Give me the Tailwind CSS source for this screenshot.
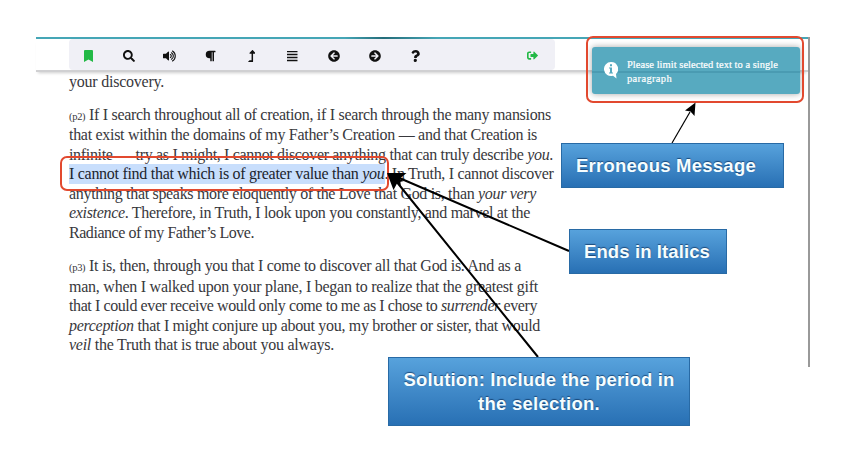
<!DOCTYPE html>
<html lang="en">
<head>
<meta charset="utf-8">
<title>Selection message annotations</title>
<script src="https://cdn.jsdelivr.net/npm/@tailwindcss/browser@4"></script>
</head>
<body class="bg-white">
<div class="relative w-[846px] h-[462px] overflow-hidden pl-9 pt-[37px]">
  <!-- Reader window -->
  <main class="w-[774px] h-[330px] border-r-2 border-[#999]">
    <div class="h-[2px] bg-linear-to-r from-[#45a6b6] from-40% via-[#246d7a] via-45% to-[#45a6b6] to-52%"></div>
    <header class="h-[33px] pl-[33px] border-b-2 border-[#d0d0d2] shadow-[0_3px_3px_-2px_rgba(0,0,0,0.2)]">
      <nav class="w-[486px] h-[31px] bg-[#f0f0f6] rounded-sm flex items-center text-[#111] pt-[2px]">
        <span class="w-[39px] flex justify-center"><svg class="h-[12px]" viewBox="0 0 384 512" fill="#23b946"><path d="M0 512V48C0 21.500 21.500 0 48 0h288c26.500 0 48 21.500 48 48v464L192 400z"/></svg></span>
        <span class="w-[41px] flex justify-center"><svg class="h-[12px]" viewBox="0 0 512 512" fill="currentColor"><path d="M505 442.700L405.300 343c-4.500-4.500-10.600-7-17-7H372c27.600-35.300 44-79.700 44-128C416 93.100 322.900 0 208 0S0 93.100 0 208s93.100 208 208 208c48.300 0 92.700-16.400 128-44v16.300c0 6.400 2.500 12.500 7 17l99.700 99.700c9.400 9.400 24.600 9.400 33.900 0l28.300-28.300c9.400-9.400 9.400-24.600.1-34zM208 336c-70.700 0-128-57.200-128-128 0-70.700 57.200-128 128-128 70.700 0 128 57.200 128 128 0 70.700-57.200 128-128 128z"/></svg></span>
        <span class="w-[41px] flex justify-center"><svg class="h-[12px]" viewBox="0 0 576 512" fill="currentColor"><path d="M215 71l-89 89H24a24 24 0 0 0-24 24v144a24 24 0 0 0 24 24h102l89 89c15 15 41 4.500 41-17V88c0-21.500-26-32-41-17z"/><g fill="none" stroke="currentColor" stroke-width="46" stroke-linecap="round"><path d="M316 192a73 73 0 0 1 0 128"/><path d="M360 117a160 160 0 0 1 0 278"/><path d="M404 45a246 246 0 0 1 0 422"/></g></svg></span>
        <span class="w-[41px] flex justify-center"><svg class="h-[12px]" viewBox="0 0 448 512" fill="currentColor"><path d="M448 48v32a16 16 0 0 1-16 16h-48v368a16 16 0 0 1-16 16h-32a16 16 0 0 1-16-16V96h-32v368a16 16 0 0 1-16 16h-32a16 16 0 0 1-16-16V352h-32a160 160 0 0 1 0-320h240a16 16 0 0 1 16 16z"/></svg></span>
        <span class="w-[41px] flex justify-center"><svg class="h-[12px]" viewBox="0 0 320 512" fill="currentColor"><path d="M313.600 119.300L209.100 7.200c-9.500-10.200-25.600-10.200-35.200 0L70.200 119.300C56 134.700 66.900 160 88 160h63.900v272H76c-3.200 0-6.200 1.300-8.500 3.500l-56 56C4 499 9.400 512 20 512h172c13.300 0 24-10.700 24-24V160h80c20.900 0 31.900-25.100 17.600-40.700z"/></svg></span>
        <span class="w-[41px] flex justify-center"><svg class="h-[12px]" viewBox="0 0 448 512" fill="currentColor"><path d="M0 40h448v60H0zM0 165h448v60H0zM0 290h448v60H0zM0 415h448v60H0z"/></svg></span>
        <span class="w-[41px] flex justify-center"><svg class="h-[12px]" viewBox="0 0 512 512" fill="currentColor"><path d="M256 504C119 504 8 393 8 256S119 8 256 8s248 111 248 248-111 248-248 248zm28.900-143.600L209.400 288H392c13.300 0 24-10.700 24-24v-16c0-13.300-10.700-24-24-24H209.400l75.500-72.400c9.700-9.300 9.900-24.800.4-34.300l-11-10.900c-9.400-9.400-24.600-9.400-33.900 0L107.700 239c-9.400 9.400-9.400 24.600 0 33.900l132.700 132.700c9.400 9.400 24.600 9.400 33.900 0l11-10.900c9.500-9.500 9.300-25-.4-34.300z"/></svg></span>
        <span class="w-[41px] flex justify-center"><svg class="h-[12px] -scale-x-100" viewBox="0 0 512 512" fill="currentColor"><path d="M256 504C119 504 8 393 8 256S119 8 256 8s248 111 248 248-111 248-248 248zm28.900-143.600L209.400 288H392c13.300 0 24-10.700 24-24v-16c0-13.300-10.700-24-24-24H209.400l75.500-72.400c9.700-9.300 9.900-24.800.4-34.300l-11-10.900c-9.400-9.400-24.600-9.400-33.900 0L107.700 239c-9.400 9.400-9.400 24.600 0 33.900l132.700 132.700c9.400 9.400 24.600 9.400 33.900 0l11-10.900c9.500-9.500 9.300-25-.4-34.300z"/></svg></span>
        <span class="w-[41px] flex justify-center"><svg class="h-[12px]" viewBox="0 0 384 512" fill="currentColor"><path d="M202 0C122 0 70 33 29 91c-7 11-5 25 5 33l43 33c11 8 26 6 34-4 25-32 43-50 82-50 30 0 67 19 67 48 0 22-18 33-48 50-35 19-80 43-80 104v16c0 13 11 24 24 24h72c13 0 24-11 24-24v-8c0-42 123-44 123-158C375 69 286 0 202 0zm-10 373a70 70 0 1 0 0 139 70 70 0 0 0 0-139z"/></svg></span>
        <span class="ml-auto mr-[17px]"><svg class="h-[11px]" viewBox="0 0 512 512" fill="#23b946"><path d="M180 448H96c-53 0-96-43-96-96V160c0-53 43-96 96-96h84c7 0 12 5 12 12v52c0 7-5 12-12 12H96c-11 0-20 9-20 20v192c0 11 9 20 20 20h84c7 0 12 5 12 12v52c0 7-5 12-12 12zm117-31V328H184c-13 0-24-11-24-24v-96c0-13 11-24 24-24h113V95c0-21 26-32 41-17l167 161c9 9 9 25 0 34L338 434c-15 15-41 4-41-17z"/></svg></span>
      </nav>
    </header>

    <article class="pl-[33px] text-[16px] leading-[19.500px] text-[#38383c] whitespace-nowrap font-['Palatino_Linotype','Palatino','Liberation_Serif',serif]">
      <p class="h-[19.500px]"><span class="inline-block" data-w="95">your discovery.</span></p>
      <p class="mt-[13px]">
        <span class="block w-fit h-[20.500px]" data-w="482"><small class="text-[10.500px] leading-none">(p2)</small> If I search throughout all of creation, if I search through the many mansions</span>
        <span class="block w-fit h-[19.500px]" data-w="468">that exist within the domains of my Father’s Creation — and that Creation is</span>
        <span class="block w-fit h-[19.500px]" data-w="484">infinite — try as I might, I cannot discover anything that can truly describe <i>you</i>.</span>
        <span class="flex w-fit h-[19.500px]"><span class="bg-[#c8defc] text-[#20242c]" data-w="315.5">I cannot find that which is of greater value than <i>you</i></span><span class="whitespace-pre" data-w="169">. In Truth, I cannot discover</span></span>
        <span class="block w-fit h-[19.500px]" data-w="467">anything that speaks more eloquently of the Love that God is, than <i>your very</i></span>
        <span class="block w-fit h-[19.500px]" data-w="461"><i>existence</i>. Therefore, in Truth, I look upon you constantly, and marvel at the</span>
        <span class="block w-fit h-[19.500px]" data-w="185">Radiance of my Father’s Love.</span>
      </p>
      <p class="mt-[14px]">
        <span class="block w-fit h-[20.500px]" data-w="452"><small class="text-[10.500px] leading-none">(p3)</small> It is, then, through you that I come to discover all that God is. And as a</span>
        <span class="block w-fit h-[19.500px]" data-w="469">man, when I walked upon your plane, I began to realize that the greatest gift</span>
        <span class="block w-fit h-[19.500px]" data-w="468">that I could ever receive would only come to me as I chose to <i>surrender</i> every</span>
        <span class="block w-fit h-[19.500px]" data-w="471"><i>perception</i> that I might conjure up about you, my brother or sister, that would</span>
        <span class="block w-fit h-[19.500px]" data-w="265"><i>veil</i> the Truth that is true about you always.</span>
      </p>
    </article>
  </main>

  <!-- Toast -->
  <div class="absolute left-[592px] top-[47px] w-[208px] h-[47px] rounded-[3px] bg-[#57aac0] shadow-[0_0_6px_rgba(0,0,0,0.35)] flex items-center pl-[12px] text-white">
    <span class="absolute inset-x-0 top-[24px] h-[2px] bg-[#4a9bb2]"></span>
    <svg class="relative w-[14px] h-[17px] shrink-0" viewBox="0 0 14 17"><path fill="#fff" d="M7 0a7 7 0 1 0 2 13.700L12.500 16.500 12 12A7 7 0 0 0 7 0z"/><path fill="#57aac0" d="M6 2.300h2v2H6zM5 5.500h3v5h1v1H5v-1h1v-4H5z"/></svg>
    <p class="relative top-px ml-[9px] text-[10.500px] leading-[13.500px] whitespace-nowrap font-['Palatino_Linotype','Palatino','Liberation_Serif',serif] [-webkit-text-stroke:0.200px_white]"><span class="block w-fit" data-w="151">Please limit selected text to a single</span><span class="block w-fit" data-w="45">paragraph</span></p>
  </div>

  <!-- Annotation frames -->
  <div class="absolute left-[586px] top-[36px] w-[218px] h-[67px] border-2 border-[#e2492f] rounded-[7px]"></div>
  <div class="absolute left-[60px] top-[156px] w-[329px] h-[35px] border-2 border-[#e2492f] rounded-[7px]"></div>

  <!-- Arrows -->
  <svg class="absolute left-0 top-0" width="846" height="462" viewBox="0 0 846 462" stroke="#000" fill="#000">
    <path d="M672 143L690 112" stroke-width="1.200"/>
    <path d="M695.500 102.500L694.500 116L690.500 111.500L685 110.500Z" stroke="none"/>
    <path d="M569 251L397 177M538 357L396 181" stroke-width="2"/>
    <path d="M387 173L406.500 173L400 178.500L401 187Z" stroke="none"/>
    <path d="M387 173L404 181L397.500 182.500L393.500 190Z" stroke="none"/>
  </svg>

  <!-- Callouts -->
  <div class="absolute left-[561px] top-[143px] w-[223px] h-[45px] border border-[#286aa5] bg-linear-to-b from-[#57a2dc] to-[#2870b4] pl-[14px] flex items-center text-[#f5fdff] font-bold text-[18.500px] leading-6 whitespace-nowrap font-['Liberation_Sans',sans-serif] [text-shadow:0_-1px_1px_rgba(0,30,70,0.6)]"><span data-w="180">Erroneous Message</span></div>
  <div class="absolute left-[569px] top-[229px] w-[158px] h-[45px] border border-[#286aa5] bg-linear-to-b from-[#57a2dc] to-[#2870b4] pl-[14px] flex items-center text-[#f5fdff] font-bold text-[18.500px] leading-6 whitespace-nowrap font-['Liberation_Sans',sans-serif] [text-shadow:0_-1px_1px_rgba(0,30,70,0.6)]"><span data-w="126">Ends in Italics</span></div>
  <div class="absolute left-[388px] top-[357px] w-[302px] h-[69px] border border-[#286aa5] bg-linear-to-b from-[#57a2dc] to-[#2870b4] flex flex-col items-center justify-center text-[#f5fdff] font-bold text-[18.500px] leading-6 whitespace-nowrap font-['Liberation_Sans',sans-serif] [text-shadow:0_-1px_1px_rgba(0,30,70,0.6)]"><span data-w="271">Solution: Include the period in</span><span data-w="122">the selection.</span></div>
</div>
<script>
  // Track each line of type to its measure once styles are applied.
  window.addEventListener('load', function () {
    document.querySelectorAll('[data-w]').forEach(function (el) {
      var gap = Number(el.dataset.w) - el.getBoundingClientRect().width;
      el.style.letterSpacing = gap / el.textContent.length + 'px';
    });
  });
</script>
</body>
</html>
